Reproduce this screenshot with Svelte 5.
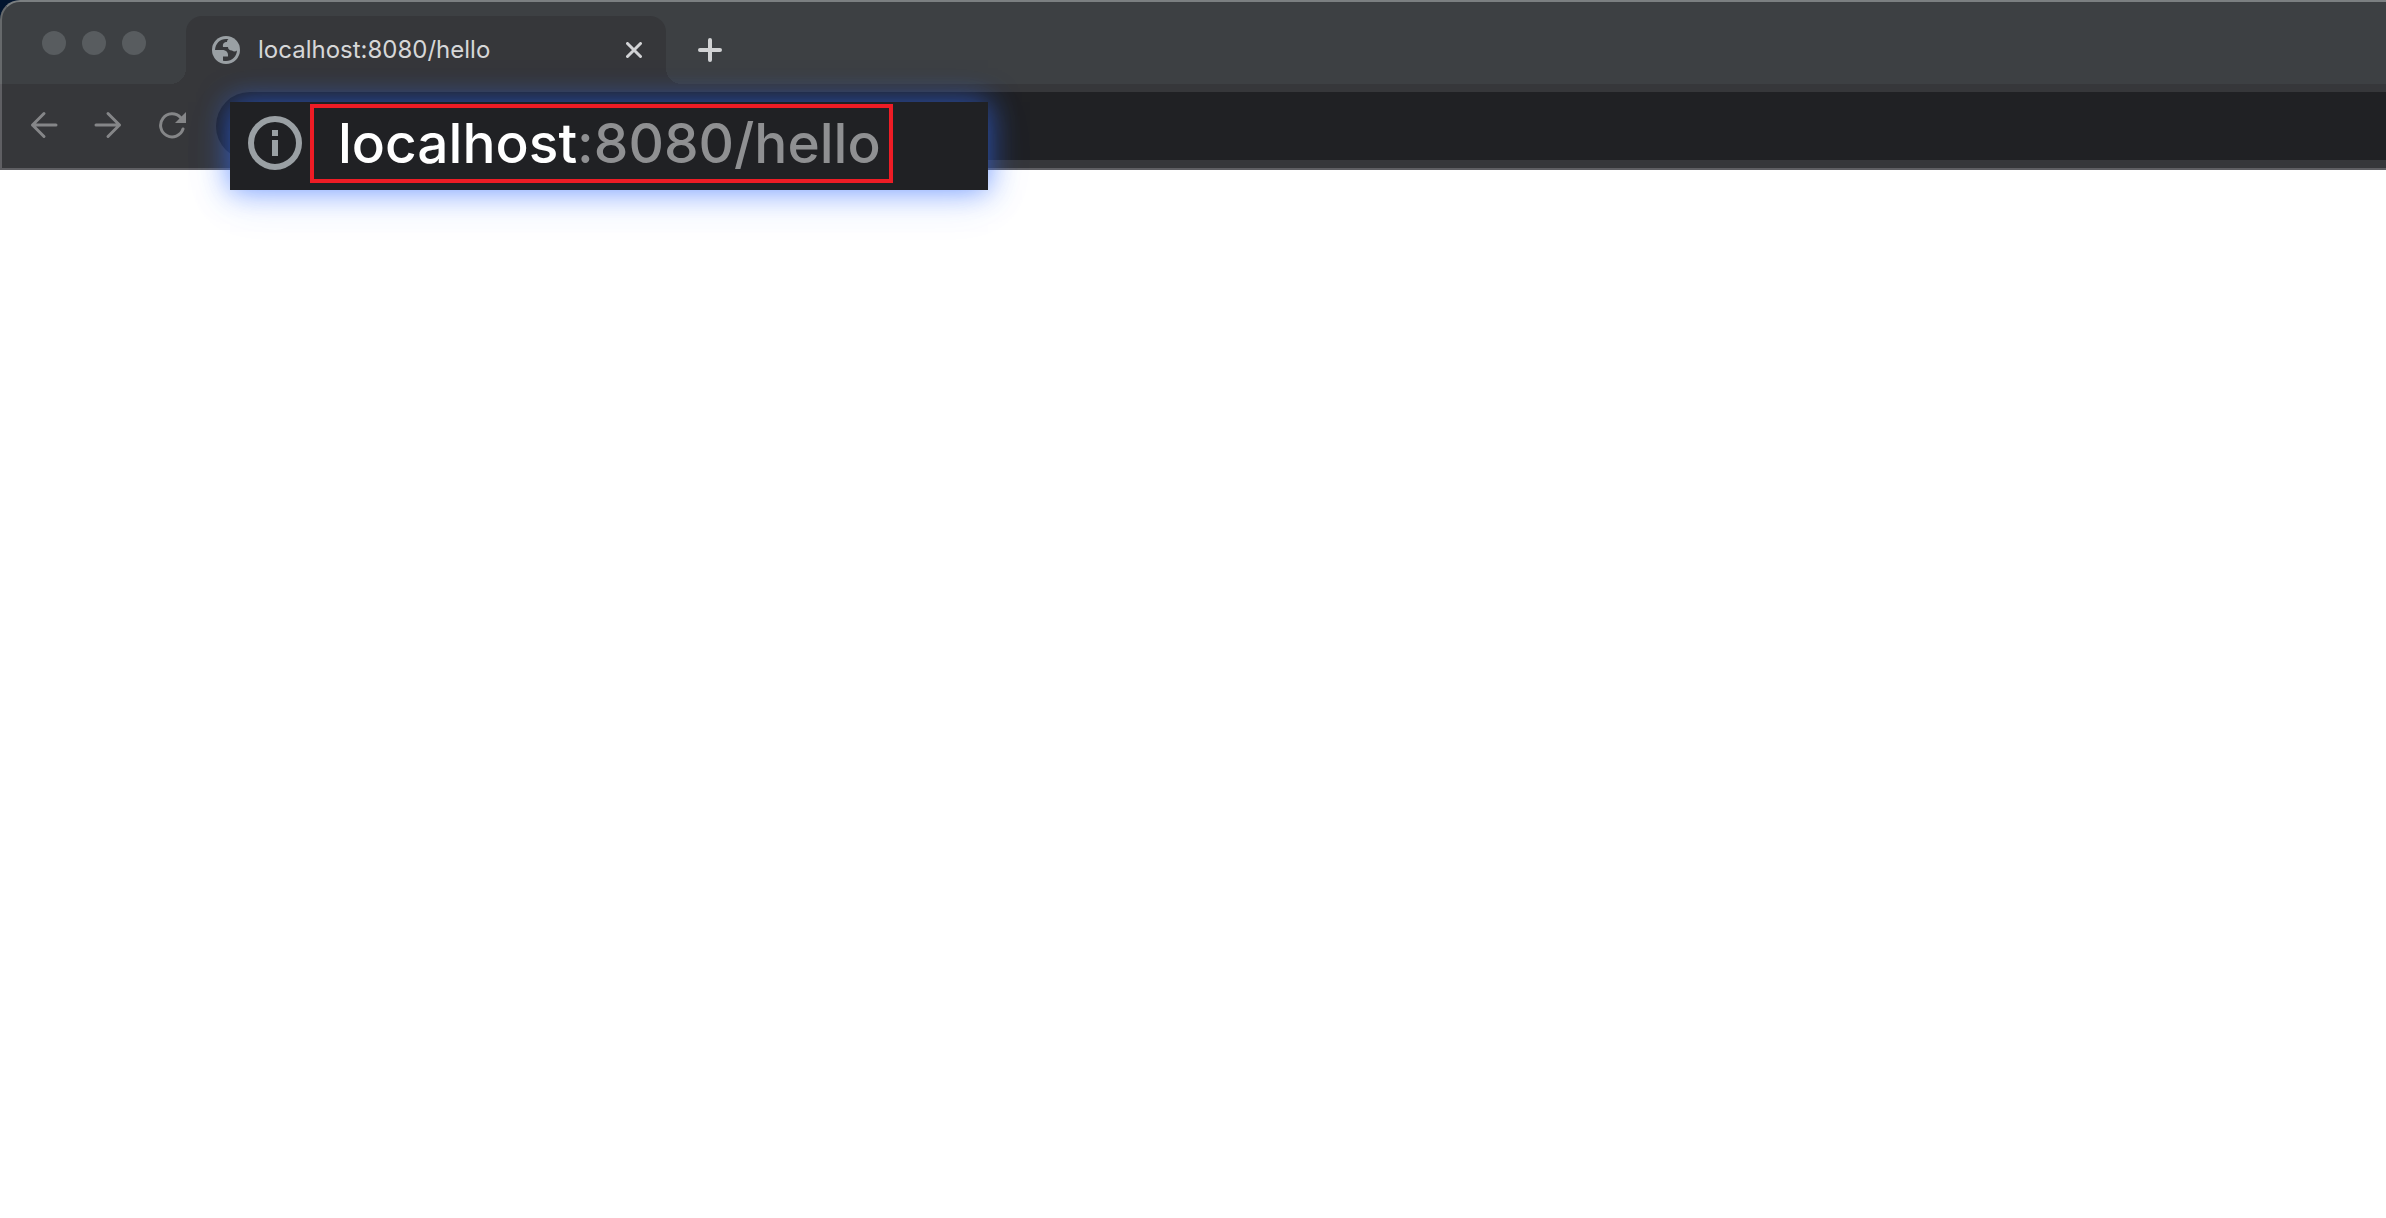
<script>
  const host = 'localhost';
  const path = ':8080/hello';
</script>

<div class="window">
  <header class="chrome">
    <div class="tabstrip">
      <div class="lights" aria-hidden="true">
        <span></span><span></span><span></span>
      </div>
      <div class="tab">
        <svg class="globe" viewBox="0 0 28 28" aria-hidden="true">
          <circle cx="14" cy="14" r="14" />
          <path class="cut" d="M16.500 3.300C9 2 3.500 7 3 14h7c4.500 0 6.500 2.500 6 6.500h-5v4.200C18.500 26.500 24.500 21.500 25 14.500c-1.500 1.200-3.500 1.200-5 0-2.500 0-4-1.500-4-3.500h-5c-.5-3.500 1-5 4-5 0-1.200.5-2.200 1.500-2.700z" />
        </svg>
        <span class="title">{host}{path}</span>
        <button class="close" aria-label="Close tab">
          <svg viewBox="0 0 16 16"><path d="M1.500 1.500l13 13M14.500 1.500l-13 13" /></svg>
        </button>
      </div>
      <button class="new-tab" aria-label="New tab">
        <svg viewBox="0 0 24 24"><path d="M12 2v20M2 12h20" /></svg>
      </button>
    </div>

    <div class="toolbar">
      <nav class="nav" aria-label="History">
        <button aria-label="Back">
          <svg viewBox="0 0 28 28"><path d="M26 14H2.500M14 2.500L2.500 14L14 25.500" /></svg>
        </button>
        <button aria-label="Forward">
          <svg viewBox="0 0 28 28"><path d="M2 14h23.500M14 2.500L25.500 14L14 25.500" /></svg>
        </button>
        <button aria-label="Reload">
          <svg viewBox="0 0 28 28">
            <path d="M25 18A11.500 11.500 0 1 1 22.500 6.500" />
            <path class="solid" d="M28 1v11H17z" />
          </svg>
        </button>
      </nav>
      <input class="omnibox" type="text" aria-label="Address" />

      <div class="callout">
        <svg class="info" viewBox="0 0 54 54" aria-hidden="true">
          <circle cx="27" cy="27" r="24" />
          <path d="M24 14h6v6h-6zM24 24h6v16h-6z" />
        </svg>
        <div class="highlight"><span class="host">{host}</span><span>{path}</span></div>
      </div>
    </div>
  </header>
  <main class="page"></main>
</div>

<style>
  :global(body) {
    margin: 0;
    background: #fff;
  }
  .window {
    min-height: 100vh;
    display: flex;
    flex-direction: column;
    font-family: Inter, 'Liberation Sans', sans-serif;
  }
  .chrome {
    background: #02152f;
  }
  button {
    display: flex;
    align-items: center;
    justify-content: center;
    padding: 0;
    border: 0;
    background: none;
  }
  svg {
    display: block;
    flex: none;
  }
  .tabstrip {
    box-sizing: border-box;
    height: 84px;
    display: flex;
    border-top: 2px solid #7b7f81;
    border-left: 2px solid #66696b;
    border-top-left-radius: 20px;
    background: #3d4043;
  }
  .lights {
    display: flex;
    gap: 16px;
    padding: 29px 40px 0;
  }
  .lights span {
    width: 24px;
    height: 24px;
    border-radius: 50%;
    background: #585c5f;
  }
  .tab {
    position: relative;
    box-sizing: border-box;
    width: 480px;
    margin-top: 14px;
    padding: 0 24px 0 26px;
    display: flex;
    align-items: center;
    border-radius: 16px 16px 0 0;
    background: #36373a;
  }
  .tab::before,
  .tab::after {
    content: '';
    position: absolute;
    bottom: 0;
    width: 16px;
    height: 16px;
  }
  .tab::before {
    right: 100%;
    background: radial-gradient(circle at 0 0, transparent 16px, #36373a 16px);
  }
  .tab::after {
    left: 100%;
    background: radial-gradient(circle at 100% 0, transparent 16px, #36373a 16px);
  }
  .globe {
    width: 28px;
    height: 28px;
    fill: #9aa0a4;
  }
  .globe .cut {
    fill: #36373a;
  }
  .title {
    flex: 1;
    padding-left: 18px;
    font-size: 24px;
    line-height: 32px;
    color: #d6d7d8;
  }
  .close svg {
    width: 16px;
    height: 16px;
  }
  .new-tab svg {
    width: 24px;
    height: 24px;
  }
  .close,
  .new-tab {
    stroke: #d2d3d5;
    stroke-width: 3;
    stroke-linecap: round;
  }
  .new-tab {
    margin: 14px 0 0 32px;
    stroke-width: 4;
  }
  .tab .close {
    width: 16px;
    height: 68px;
  }
  .toolbar {
    position: relative;
    box-sizing: border-box;
    height: 86px;
    display: flex;
    align-items: center;
    border-left: 2px solid #5f5f63;
    border-bottom: 2px solid #5f5f63;
    background: #36373a;
  }
  .nav {
    display: flex;
    gap: 36px;
    padding: 0 30px 2px 28px;
  }
  .nav svg {
    width: 28px;
    height: 28px;
    fill: none;
    stroke: #858688;
    stroke-width: 3;
    stroke-linecap: round;
    stroke-linejoin: round;
  }
  .nav .solid {
    fill: #858688;
    stroke: none;
  }
  .omnibox {
    flex: 1;
    min-width: 0;
    box-sizing: border-box;
    height: 68px;
    padding: 0 32px;
    border: 0;
    border-radius: 34px 0 0 34px;
    background: #202124;
    color: #fff;
    font: inherit;
    outline: 0;
  }
  .callout {
    position: absolute;
    top: 18px;
    left: 228px;
    box-sizing: border-box;
    width: 758px;
    height: 88px;
    padding: 2px 18px;
    display: flex;
    align-items: flex-start;
    gap: 8px;
    background: #202124;
    box-shadow:
      0 0 28px rgba(50, 110, 255, 0.66),
      0 8px 48px rgba(50, 110, 255, 0.12);
  }
  .info {
    width: 54px;
    height: 54px;
    margin-top: 12px;
    fill: #9aa0a4;
  }
  .info circle {
    fill: none;
    stroke: #9aa0a4;
    stroke-width: 6;
  }
  .highlight {
    box-sizing: border-box;
    width: 583px;
    height: 79px;
    padding-left: 24px;
    border: 4px solid #ee1c25;
    font-size: 55px;
    font-weight: 500;
    line-height: 70px;
    white-space: nowrap;
    color: #8f9092;
  }
  .host {
    color: #fff;
  }
  .page {
    flex: 1;
  }
</style>
